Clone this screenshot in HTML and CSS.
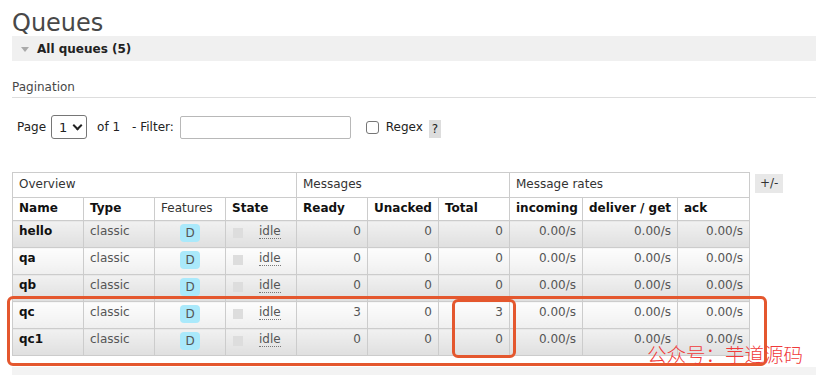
FILE: index.html
```html
<!DOCTYPE html>
<html lang="en">
<head>
  <meta charset="UTF-8" />
  <title>Queues</title>
  <link rel="stylesheet" href="styles.css">
</head>
<body>
  <div class="page">
    <h1 class="page-title">Queues</h1>

    <!-- All queues section -->
    <div class="section-head">
      <span class="arrow"></span>
      <span>All queues (5)</span>
    </div>

    <div class="section-body">
      <h3 class="pag-title">Pagination</h3>

      <div class="filter-row">
        <span>Page</span>
        <div class="select-box"><span>1</span><span class="chev"></span></div>
        <span class="of">of 1</span>
        <span class="filter-label">- Filter:</span>
        <div class="filter-input"></div>
        <span class="checkbox"></span>
        <span class="regex">Regex</span>
        <span class="help">?</span>
      </div>

      <div class="table-wrap">
        <table class="list">
          <colgroup>
            <col style="width:71px"><col style="width:71px"><col style="width:71px"><col style="width:71px">
            <col style="width:71px"><col style="width:71px"><col style="width:71px">
            <col style="width:73px"><col style="width:95px"><col style="width:72px">
          </colgroup>
          <thead>
            <tr class="group">
              <th colspan="4">Overview</th>
              <th colspan="3">Messages</th>
              <th colspan="3">Message rates</th>
            </tr>
            <tr class="heads">
              <th>Name</th>
              <th>Type</th>
              <th class="plain">Features</th>
              <th>State</th>
              <th>Ready</th>
              <th>Unacked</th>
              <th>Total</th>
              <th>incoming</th>
              <th>deliver / get</th>
              <th>ack</th>
            </tr>
          </thead>
          <tbody>
            <tr class="alt1">
              <td class="name">hello</td><td>classic</td>
              <td class="c"><span class="badge">D</span></td>
              <td><span class="dot"></span><abbr>idle</abbr></td>
              <td class="r">0</td><td class="r">0</td><td class="r">0</td>
              <td class="r">0.00/s</td><td class="r">0.00/s</td><td class="r">0.00/s</td>
            </tr>
            <tr class="alt2">
              <td class="name">qa</td><td>classic</td>
              <td class="c"><span class="badge">D</span></td>
              <td><span class="dot"></span><abbr>idle</abbr></td>
              <td class="r">0</td><td class="r">0</td><td class="r">0</td>
              <td class="r">0.00/s</td><td class="r">0.00/s</td><td class="r">0.00/s</td>
            </tr>
            <tr class="alt1">
              <td class="name">qb</td><td>classic</td>
              <td class="c"><span class="badge">D</span></td>
              <td><span class="dot"></span><abbr>idle</abbr></td>
              <td class="r">0</td><td class="r">0</td><td class="r">0</td>
              <td class="r">0.00/s</td><td class="r">0.00/s</td><td class="r">0.00/s</td>
            </tr>
            <tr class="alt2">
              <td class="name">qc</td><td>classic</td>
              <td class="c"><span class="badge">D</span></td>
              <td><span class="dot"></span><abbr>idle</abbr></td>
              <td class="r">3</td><td class="r">0</td><td class="r">3</td>
              <td class="r">0.00/s</td><td class="r">0.00/s</td><td class="r">0.00/s</td>
            </tr>
            <tr class="alt1">
              <td class="name">qc1</td><td>classic</td>
              <td class="c"><span class="badge">D</span></td>
              <td><span class="dot"></span><abbr>idle</abbr></td>
              <td class="r">0</td><td class="r">0</td><td class="r">0</td>
              <td class="r">0.00/s</td><td class="r">0.00/s</td><td class="r">0.00/s</td>
            </tr>
          </tbody>
        </table>
        <span class="toggle">+/-</span>
      </div>
    </div>

    <!-- next collapsed section -->
    <div class="next-section"></div>

    <!-- annotations drawn over the screenshot -->
    <div class="mark mark-rows"></div>
    <div class="mark mark-total"></div>
    <div class="watermark">公众号：芋道源码</div>
  </div>
</body>
</html>
```

FILE: styles.css
```css
body {
  margin: 0;
  font-family: "DejaVu Sans", Verdana, sans-serif;
  font-size: 12px;
  color: #484848;
  background: #fff;
}

.page {
  position: relative;
  padding-left: 12px;
  height: 375px;
  overflow: hidden;
}

.page-title {
  margin: 0 0 1px;
  padding-top: 11px;
  font-size: 24px;
  line-height: 24px;
  font-weight: normal;
  color: #484848;
}

.section-head {
  display: flex;
  align-items: center;
  height: 25px;
  background: #f0f0f0;
  font-weight: bold;
  color: #222;
}

.arrow {
  width: 0;
  height: 0;
  margin: 1px 8px 0 9px;
  border-left: 4px solid transparent;
  border-right: 4px solid transparent;
  border-top: 5px solid #aaa;
}

.pag-title {
  margin: 0;
  padding-top: 19px;
  padding-bottom: 2px;
  line-height: 15px;
  font-size: 12px;
  font-weight: normal;
  border-bottom: 1px solid #ddd;
}

.filter-row {
  display: flex;
  align-items: center;
  margin-top: 17px;
  padding-left: 5px;
  height: 24px;
  color: #222;
}

.select-box {
  display: flex;
  align-items: center;
  box-sizing: border-box;
  width: 36px;
  height: 24px;
  margin-left: 5px;
  padding-left: 7px;
  border: 1px solid #767676;
  border-radius: 3px;
  font-size: 13px;
}

.chev {
  width: 5px;
  height: 5px;
  margin: -3px 0 0 7px;
  border-right: 2px solid #222;
  border-bottom: 2px solid #222;
  transform: rotate(45deg);
}

.of {
  margin-left: 10px;
}

.filter-label {
  margin-left: 12px;
}

.filter-input {
  box-sizing: border-box;
  width: 171px;
  height: 23px;
  margin-left: 6px;
  border: 1px solid #b8b8b8;
  border-radius: 2px;
}

.checkbox {
  box-sizing: border-box;
  width: 13px;
  height: 13px;
  margin-left: 15px;
  border: 1px solid #767676;
  border-radius: 3px;
}

.regex {
  margin-left: 7px;
}

.help {
  margin: 3px 0 0 6px;
  padding: 1px 3px;
  background: #ddd;
  line-height: 16px;
}

.table-wrap {
  display: flex;
  align-items: flex-start;
  gap: 5px;
  margin-top: 33px;
}

table.list {
  table-layout: fixed;
  border-collapse: collapse;
  width: 737px;
}

table.list th,
table.list td {
  border: 1px solid #ccc;
  line-height: 15px;
  white-space: nowrap;
  overflow: hidden;
  text-align: left;
}

table.list th {
  padding: 3px 6px 4px;
  color: #111;
  background: #fff;
}

table.list tr.group th {
  padding: 4px 6px 5px;
  font-weight: normal;
  color: #333;
}

table.list th.plain {
  font-weight: normal;
  color: #333;
}

table.list td {
  padding: 3px 6px 5px;
  height: 18px;
  vertical-align: top;
  color: #555;
}

table.list td.name {
  font-weight: bold;
  color: #111;
}

table.list td.r {
  text-align: right;
}

table.list td.c {
  text-align: center;
}

tr.alt1 td {
  background: linear-gradient(#f1f1f1, #dfdfdf);
}

tr.alt2 td {
  background: linear-gradient(#fdfdfd, #efefef);
}

.badge {
  display: inline-block;
  vertical-align: top;
  padding: 2px 5px;
  line-height: 14px;
  border-radius: 4px;
  background: #aae9fb;
  color: #555;
}

.dot {
  display: inline-block;
  width: 10px;
  height: 10px;
  margin: 4px 16px 0 1px;
  vertical-align: top;
  background: #ddd;
}

abbr {
  text-decoration: none;
  border-bottom: 1px dotted #777;
}

.toggle {
  margin-top: 2px;
  padding: 2px 5px;
  background: #e8e8e8;
  color: #333;
  line-height: 15px;
}

.next-section {
  margin-top: 11px;
  height: 30px;
  background: #f3f3f3;
}

.mark {
  position: absolute;
  box-sizing: border-box;
  border: 3px solid #e4572e;
  border-radius: 6px;
}

.mark-rows {
  left: 7px;
  top: 296px;
  width: 760px;
  height: 70px;
}

.mark-total {
  left: 452px;
  top: 299px;
  width: 64px;
  height: 59px;
}

.watermark {
  position: absolute;
  left: 647px;
  top: 341px;
  font-family: "Noto Sans CJK SC", sans-serif;
  font-weight: 300;
  font-size: 19.5px;
  line-height: 26px;
  color: #f03a3a;
}
```
